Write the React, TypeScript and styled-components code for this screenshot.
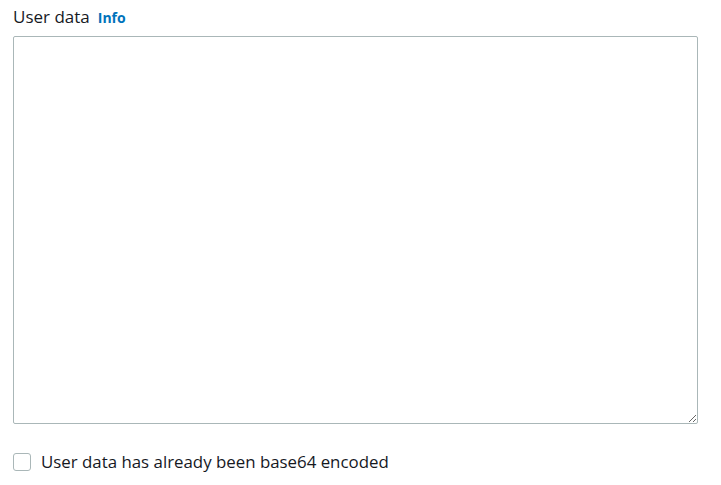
import React from "react";
import styled, { createGlobalStyle } from "styled-components";

const Global = createGlobalStyle`
  html, body { margin: 0; padding: 0; background: #ffffff; }
  body { font-family: "Open Sans", "Noto Sans", Arial, sans-serif; color: #16191f; }
`;

const Page = styled.div`
  padding: 4px 24px 0 13px;
  display: flex;
  flex-direction: column;
`;

const LabelRow = styled.div`
  display: flex;
  align-items: baseline;
  gap: 8px;
  height: 32px;
`;

const Label = styled.label`
  font-size: 17px;
  line-height: 26px;
  color: #16191f;
`;

const InfoLink = styled.a`
  font-size: 14px;
  font-weight: 700;
  color: #0073bb;
  text-decoration: none;
`;

const Area = styled.textarea`
  box-sizing: border-box;
  width: 685px;
  height: 388px;
  border: 1px solid #aab7b8;
  border-radius: 2px;
  padding: 4px 8px;
  font-family: "Liberation Mono", monospace;
  font-size: 14px;
  resize: both;
  outline: none;
  display: block;
  margin: 0;
`;

const CheckRow = styled.label`
  display: flex;
  align-items: center;
  gap: 10px;
  margin-top: 27px;
  height: 22px;
`;

const Box = styled.span`
  box-sizing: border-box;
  width: 18px;
  height: 18px;
  border: 1px solid #aab7b8;
  border-radius: 3px;
  background: #fff;
  flex: none;
`;

const CheckText = styled.span`
  font-size: 16.85px;
  line-height: 20px;
  color: #16191f;
`;

export default function App() {
  return (
    <>
      <Global />
      <Page>
        <LabelRow>
          <Label>User data</Label>
          <InfoLink href="#">Info</InfoLink>
        </LabelRow>
        <Area />
        <CheckRow>
          <Box />
          <CheckText>User data has already been base64 encoded</CheckText>
        </CheckRow>
      </Page>
    </>
  );
}
